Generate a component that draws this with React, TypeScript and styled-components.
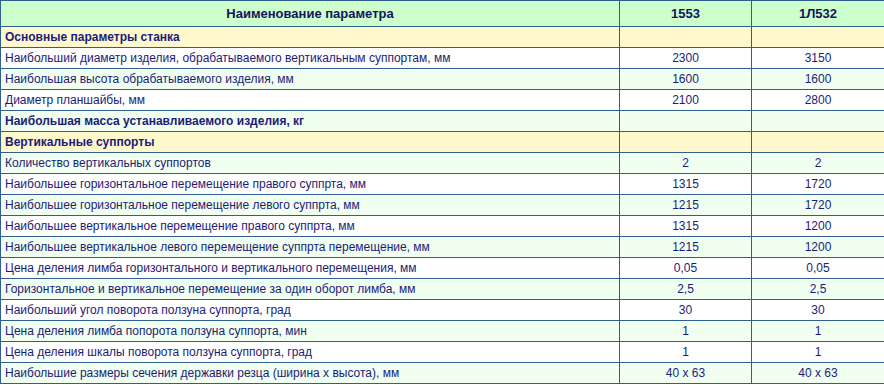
import React from 'react';
import styled, { createGlobalStyle } from 'styled-components';

interface IRow {
  name: string;
  a?: string;
  b?: string;
  kind?: 'section' | 'bold';
}

const GlobalStyle = createGlobalStyle`
  body {
    margin: 0;
    background: #ffffff;
    font-family: "Liberation Sans", Arial, sans-serif;
  }
`;

const Table = styled.table`
  width: 884px;
  border-collapse: collapse;
  table-layout: fixed;
  font-size: 12px;
  color: #1c1c78;
`;

const HeadCell = styled.th`
  background-color: #ccffcc;
  border: 1px solid #2f5f8f;
  height: 25px;
  padding: 0 4px;
  font-size: 13px;
  font-weight: bold;
  text-align: center;
  color: #14145e;
`;

const Row = styled.tr<{ $kind?: string }>`
  background-color: ${({ $kind }) => ($kind === 'section' ? '#fff8cc' : '#ffffff')};
  &:nth-child(even) {
    background-color: ${({ $kind }) => ($kind === 'section' ? '#fff8cc' : '#f0fff0')};
  }
`;

const NameCell = styled.td<{ $bold?: boolean }>`
  border: 1px solid #2f5f8f;
  height: 20px;
  padding: 0 4px;
  font-weight: ${({ $bold }) => ($bold ? 'bold' : 'normal')};
  white-space: nowrap;
`;

const ValueCell = styled.td`
  border: 1px solid #2f5f8f;
  height: 20px;
  padding: 0 4px;
  text-align: center;
`;

const rows: IRow[] = [
  { name: 'Основные параметры станка', kind: 'section' },
  { name: 'Наибольший диаметр изделия, обрабатываемого вертикальным суппортам, мм', a: '2300', b: '3150' },
  { name: 'Наибольшая высота обрабатываемого изделия, мм', a: '1600', b: '1600' },
  { name: 'Диаметр планшайбы, мм', a: '2100', b: '2800' },
  { name: 'Наибольшая масса устанавливаемого изделия, кг', kind: 'bold' },
  { name: 'Вертикальные суппорты', kind: 'section' },
  { name: 'Количество вертикальных суппортов', a: '2', b: '2' },
  { name: 'Наибольшее горизонтальное перемещение правого суппрта, мм', a: '1315', b: '1720' },
  { name: 'Наибольшее горизонтальное перемещение левого суппрта, мм', a: '1215', b: '1720' },
  { name: 'Наибольшее вертикальное перемещение правого суппрта, мм', a: '1315', b: '1200' },
  { name: 'Наибольшее вертикальное левого перемещение суппрта перемещение, мм', a: '1215', b: '1200' },
  { name: 'Цена деления лимба горизонтального и вертикального перемещения, мм', a: '0,05', b: '0,05' },
  { name: 'Горизонтальное и вертикальное перемещение за один оборот лимба, мм', a: '2,5', b: '2,5' },
  { name: 'Наибольший угол поворота ползуна суппорта, град', a: '30', b: '30' },
  { name: 'Цена деления лимба попорота ползуна суппорта, мин', a: '1', b: '1' },
  { name: 'Цена деления шкалы поворота ползуна суппорта, град', a: '1', b: '1' },
  { name: 'Наибольшие размеры сечения державки резца (ширина х высота), мм', a: '40 х 63', b: '40 х 63' },
];

const App: React.FunctionComponent = () => (
  <>
    <GlobalStyle />
    <Table>
      <colgroup>
        <col style={{ width: 619 }} />
        <col style={{ width: 132 }} />
        <col style={{ width: 133 }} />
      </colgroup>
      <tbody>
        <tr>
          <HeadCell>Наименование параметра</HeadCell>
          <HeadCell>1553</HeadCell>
          <HeadCell>1Л532</HeadCell>
        </tr>
        {rows.map((row) => (
          <Row key={row.name} $kind={row.kind}>
            <NameCell $bold={!!row.kind}>{row.name}</NameCell>
            <ValueCell>{row.a}</ValueCell>
            <ValueCell>{row.b}</ValueCell>
          </Row>
        ))}
      </tbody>
    </Table>
  </>
);

export default App;
